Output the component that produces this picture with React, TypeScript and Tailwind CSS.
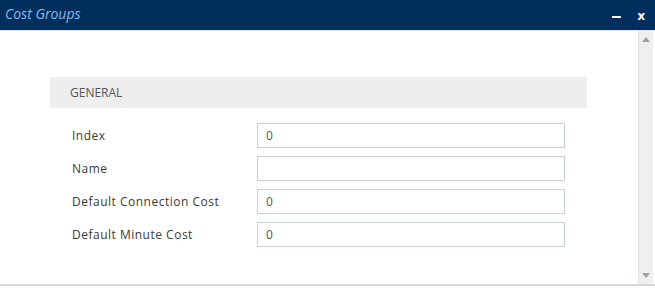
import React from 'react'

const rows = [
    { label: 'Index', value: '0' },
    { label: 'Name', value: '' },
    { label: 'Default Connection Cost', value: '0' },
    { label: 'Default Minute Cost', value: '0' },
]

export default function App() {
    return (
        <div className="w-[655px] h-[289px] flex flex-col bg-white overflow-hidden" style={{ fontFamily: '"Open Sans", sans-serif' }}>
            {/* Title bar */}
            <div className="h-[31px] bg-[#002f5d] flex items-center justify-between pl-[5px] pr-[10px] border-b border-[#dfe6ee]">
                <span className="italic text-[14px] text-[#8ab9e8] -mt-[4px]">Cost Groups</span>
                <div className="flex items-center gap-[16px] text-white font-bold">
                    <span className="block w-[9px] h-[2px] bg-white mt-[3px]" />
                    <span className="text-[13px] leading-none">x</span>
                </div>
            </div>

            <div className="flex-1 flex min-h-0">
                {/* Form content */}
                <div className="flex-1 pt-[46px] pl-[50px] pr-[51px]">
                    <div className="h-[31px] bg-[#eeeeee] flex items-center pl-[20px] text-[12px] text-[#555555]">GENERAL</div>
                    <div className="flex flex-col gap-[8px] pt-[15px]">
                        {rows.map((r) => (
                            <div key={r.label} className="flex items-center">
                                <span className="w-[207px] pl-[22px] text-[12px] tracking-[0.5px] text-[#3a3a3a]">{r.label}</span>
                                <div className="w-[308px] h-[25px] border border-[#c8d0d7] flex items-center pl-[8px] text-[12px] text-[#555555]">{r.value}</div>
                            </div>
                        ))}
                    </div>
                </div>

                {/* Scrollbar */}
                <div className="w-[15px] mr-[2px] bg-[#f0eeee] border-l border-[#e4e2e2] flex flex-col items-center justify-between py-[6px]">
                    <svg width="8" height="5" viewBox="0 0 8 5"><path d="M4 0L8 5H0z" fill="#a0a0a0" /></svg>
                    <svg width="8" height="5" viewBox="0 0 8 5"><path d="M0 0h8L4 5z" fill="#a0a0a0" /></svg>
                </div>
            </div>

            <div className="h-[2px] bg-[#d3d8dc] mb-[3px]" />
        </div>
    )
}
